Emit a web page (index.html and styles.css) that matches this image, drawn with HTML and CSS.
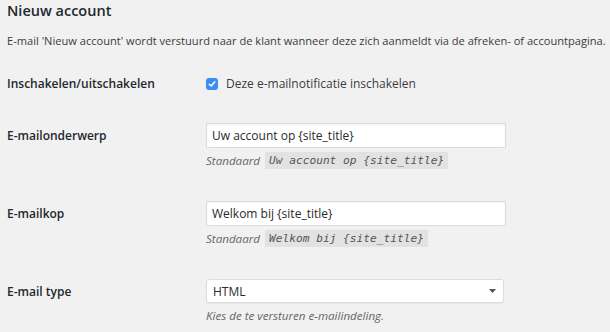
FILE: index.html
```html
<!DOCTYPE html>
<html lang="nl">

<head>
  <meta charset="UTF-8">
  <title>Nieuw account</title>
  <link rel="stylesheet" href="styles.css">
</head>

<body>
  <h2 class="title">Nieuw account</h2>
  <p class="intro">E-mail 'Nieuw account' wordt verstuurd naar de klant wanneer deze zich aanmeldt via de afreken- of accountpagina.</p>

  <div class="settings">
    <!-- inschakelen -->
    <div class="row row-check">
      <div class="label">Inschakelen/uitschakelen</div>
      <div class="field">
        <label class="check">
          <span class="box">
            <svg width="8" height="8" viewBox="0 0 8 8"><path d="M1.3 4.2 L3.2 6 L6.8 1.8" fill="none" stroke="#fff" stroke-width="1.5" stroke-linecap="round" stroke-linejoin="round"/></svg>
          </span>
          Deze e-mailnotificatie inschakelen
        </label>
      </div>
    </div>

    <div class="row">
      <div class="label">E-mailonderwerp</div>
      <div class="field">
        <div class="input">Uw account op {site_title}</div>
        <p class="hint">Standaard <code>Uw account op {site_title}</code></p>
      </div>
    </div>

    <div class="row">
      <div class="label">E-mailkop</div>
      <div class="field">
        <div class="input">Welkom bij {site_title}</div>
        <p class="hint">Standaard <code>Welkom bij {site_title}</code></p>
      </div>
    </div>

    <div class="row">
      <div class="label">E-mail type</div>
      <div class="field">
        <div class="input select">
          HTML
          <svg class="arrow" width="7" height="4" viewBox="0 0 7 4"><path d="M0 0 H7 L3.5 4 Z" fill="#555"/></svg>
        </div>
        <p class="hint">Kies de te versturen e-mailindeling.</p>
      </div>
    </div>
  </div>
</body>

</html>
```

FILE: styles.css
```css
* {
  margin: 0;
  padding: 0;
  box-sizing: border-box;
  font-family: 'Open Sans', sans-serif;
}

body {
  background-color: #f1f1f1;
  color: #23282d;
  padding: 0 7px;
}

.title {
  font-size: 14.5px;
  font-weight: 600;
  line-height: 20px;
  padding-top: 1px;
}

.intro {
  font-size: 11.1px;
  line-height: 16px;
  margin-top: 12px;
  color: #3c3c3c;
  white-space: nowrap;
}

.row {
  display: flex;
  padding: 17px 0 15px 0;
}

.row-check {
  padding: 26px 0 13px 0;
}

.label {
  width: 199px;
  flex-shrink: 0;
  font-size: 12px;
  font-weight: 600;
  line-height: 18px;
  padding-top: 4px;
}

.row-check .label {
  padding-top: 0;
}

.check {
  display: flex;
  align-items: center;
  font-size: 12px;
  line-height: 18px;
  color: #3c3c3c;
}

.box {
  width: 12px;
  height: 12px;
  border-radius: 3px;
  background-color: #3b8ff0;
  display: flex;
  align-items: center;
  justify-content: center;
  margin-right: 8px;
}

.input {
  width: 300px;
  height: 25px;
  background-color: #fff;
  border: 1px solid #dcdcdc;
  box-shadow: inset 0 1px 2px rgba(0, 0, 0, 0.05);
  font-size: 12px;
  line-height: 23px;
  padding: 0 5px;
  color: #2a2a2a;
}

.select {
  width: 298px;
  height: 24px;
  border-radius: 3px;
  box-shadow: 0 1px 1px rgba(0, 0, 0, 0.05);
  padding: 0 6px;
  display: flex;
  align-items: center;
  justify-content: space-between;
}

.select .arrow {
  margin-right: 1px;
}

.hint {
  margin-top: 4px;
  height: 17px;
  font-size: 11.6px;
  font-style: italic;
  line-height: 17px;
  color: #666;
}

.hint code {
  display: inline-block;
  font-family: 'DejaVu Sans Mono', monospace;
  font-size: 11.2px;
  font-style: italic;
  line-height: 13px;
  background-color: #e2e2e2;
  padding: 2px 4px 2px 4px;
  margin-left: 2px;
  color: #555;
  vertical-align: top;
}
```
